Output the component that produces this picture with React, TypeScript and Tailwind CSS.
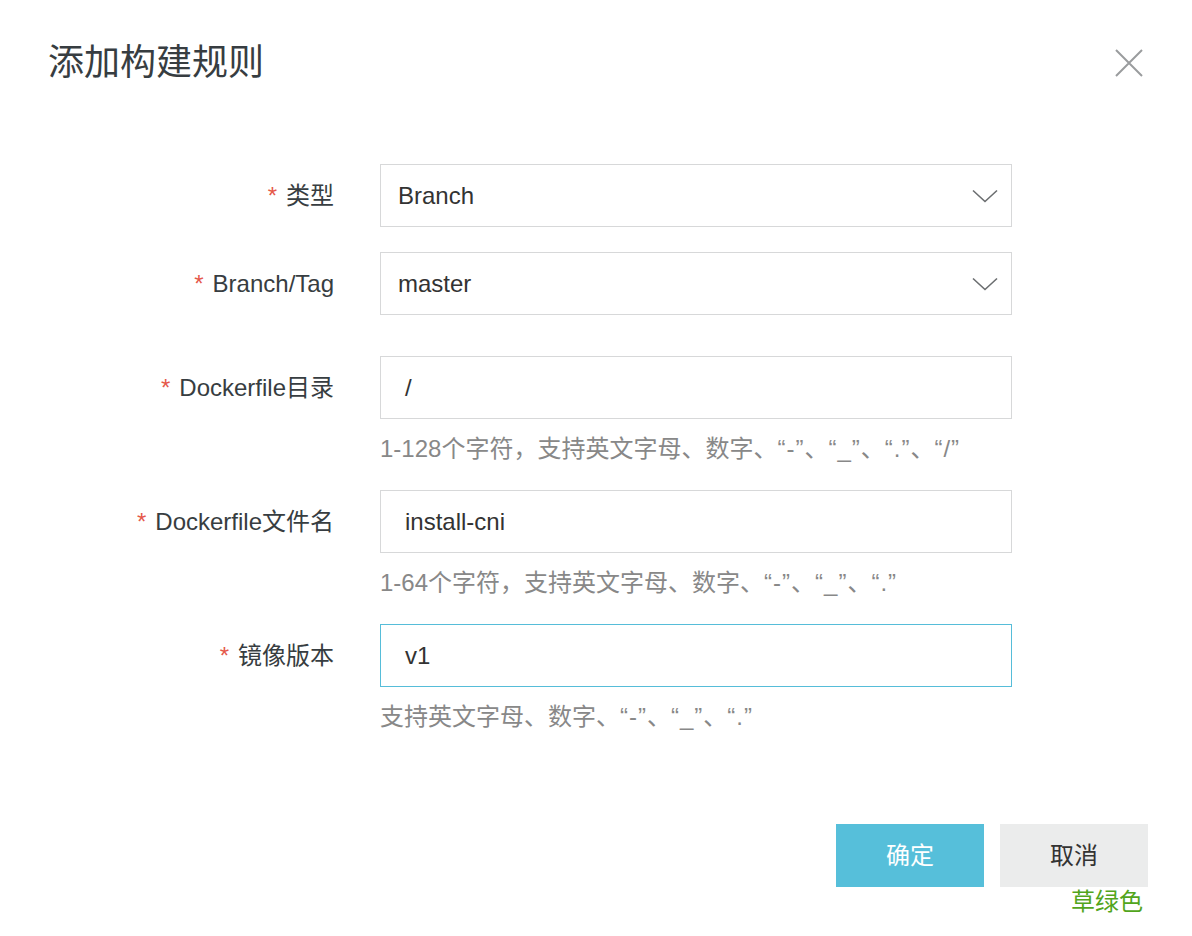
import React from 'react';

const font = { fontFamily: '"Liberation Sans", "Noto Sans CJK SC", sans-serif' };

function Chevron() {
  return (
    <svg width="26" height="14" viewBox="0 0 26 14" fill="none" className="shrink-0">
      <path d="M1 1.5 L13 12.5 L25 1.5" stroke="#6b6e70" strokeWidth="1.6" />
    </svg>
  );
}

function Label({ text }: { text: string }) {
  return (
    <div className="w-[334px] h-[63px] flex items-center justify-end shrink-0 text-[24px] text-[#373d41]">
      <span className="text-[#e5584a] mr-[9px]">*</span>
      <span>{text}</span>
    </div>
  );
}

function SelectBox({ value }: { value: string }) {
  return (
    <div className="w-[632px] h-[63px] border border-[#d7d8d9] flex items-center justify-between pl-[17px] pr-[13px] text-[24px] text-[#333]">
      <span>{value}</span>
      <Chevron />
    </div>
  );
}

function TextBox({ value, focused }: { value: string; focused?: boolean }) {
  return (
    <div
      className={`w-[632px] h-[63px] border flex items-center pl-[24px] text-[24px] text-[#333] ${
        focused ? 'border-[#56bdd9]' : 'border-[#d7d8d9]'
      }`}
    >
      {value}
    </div>
  );
}

// quoted characters are spaced a little wider, as in the original font
function Help({ prefix, chars }: { prefix: string; chars: string[] }) {
  return (
    <p className="mt-[14px] text-[24px] leading-[32px] text-[#888] [text-spacing-trim:space-all]">
      {prefix}
      {chars.map((c, i) => (
        <React.Fragment key={c}>
          <span className="tracking-[1px]">“{c}”</span>
          {i < chars.length - 1 ? '、' : ''}
        </React.Fragment>
      ))}
    </p>
  );
}

export default function App() {
  return (
    <div className="w-[1192px] h-[936px] bg-white" style={font}>
      <div className="flex items-center justify-between pl-[48px] pr-[48px] pt-[38px]">
        <h1 className="text-[36px] leading-[50px] text-[#373d41] font-normal">添加构建规则</h1>
        <button className="p-0">
          <svg width="30" height="30" viewBox="0 0 30 30" fill="none">
            <path d="M2 2 L28 28 M28 2 L2 28" stroke="#9a9c9e" strokeWidth="2" />
          </svg>
        </button>
      </div>

      <div className="mt-[76px] flex flex-col">
        <div className="flex mb-[25px]">
          <Label text="类型" />
          <div className="ml-[46px]">
            <SelectBox value="Branch" />
          </div>
        </div>
        <div className="flex mb-[41px]">
          <Label text="Branch/Tag" />
          <div className="ml-[46px]">
            <SelectBox value="master" />
          </div>
        </div>
        <div className="flex mb-[25px]">
          <Label text="Dockerfile目录" />
          <div className="ml-[46px]">
            <TextBox value="/" />
            <Help prefix="1-128个字符，支持英文字母、数字、" chars={['-', '_', '.', '/']} />
          </div>
        </div>
        <div className="flex mb-[25px]">
          <Label text="Dockerfile文件名" />
          <div className="ml-[46px]">
            <TextBox value="install-cni" />
            <Help prefix="1-64个字符，支持英文字母、数字、" chars={['-', '_', '.']} />
          </div>
        </div>
        <div className="flex">
          <Label text="镜像版本" />
          <div className="ml-[46px]">
            <TextBox value="v1" focused />
            <Help prefix="支持英文字母、数字、" chars={['-', '_', '.']} />
          </div>
        </div>
      </div>

      <div className="mt-[91px] pr-[44px] flex justify-end gap-[16px]">
        <button className="w-[148px] h-[63px] bg-[#56bfda] text-white text-[24px]">确定</button>
        <button className="w-[148px] h-[63px] bg-[#ebecec] text-[#333] text-[24px]">取消</button>
      </div>
      <div className="pr-[49px] flex justify-end">
        <span className="text-[24px] leading-[30px] text-[#52a51c]">草绿色</span>
      </div>
    </div>
  );
}
